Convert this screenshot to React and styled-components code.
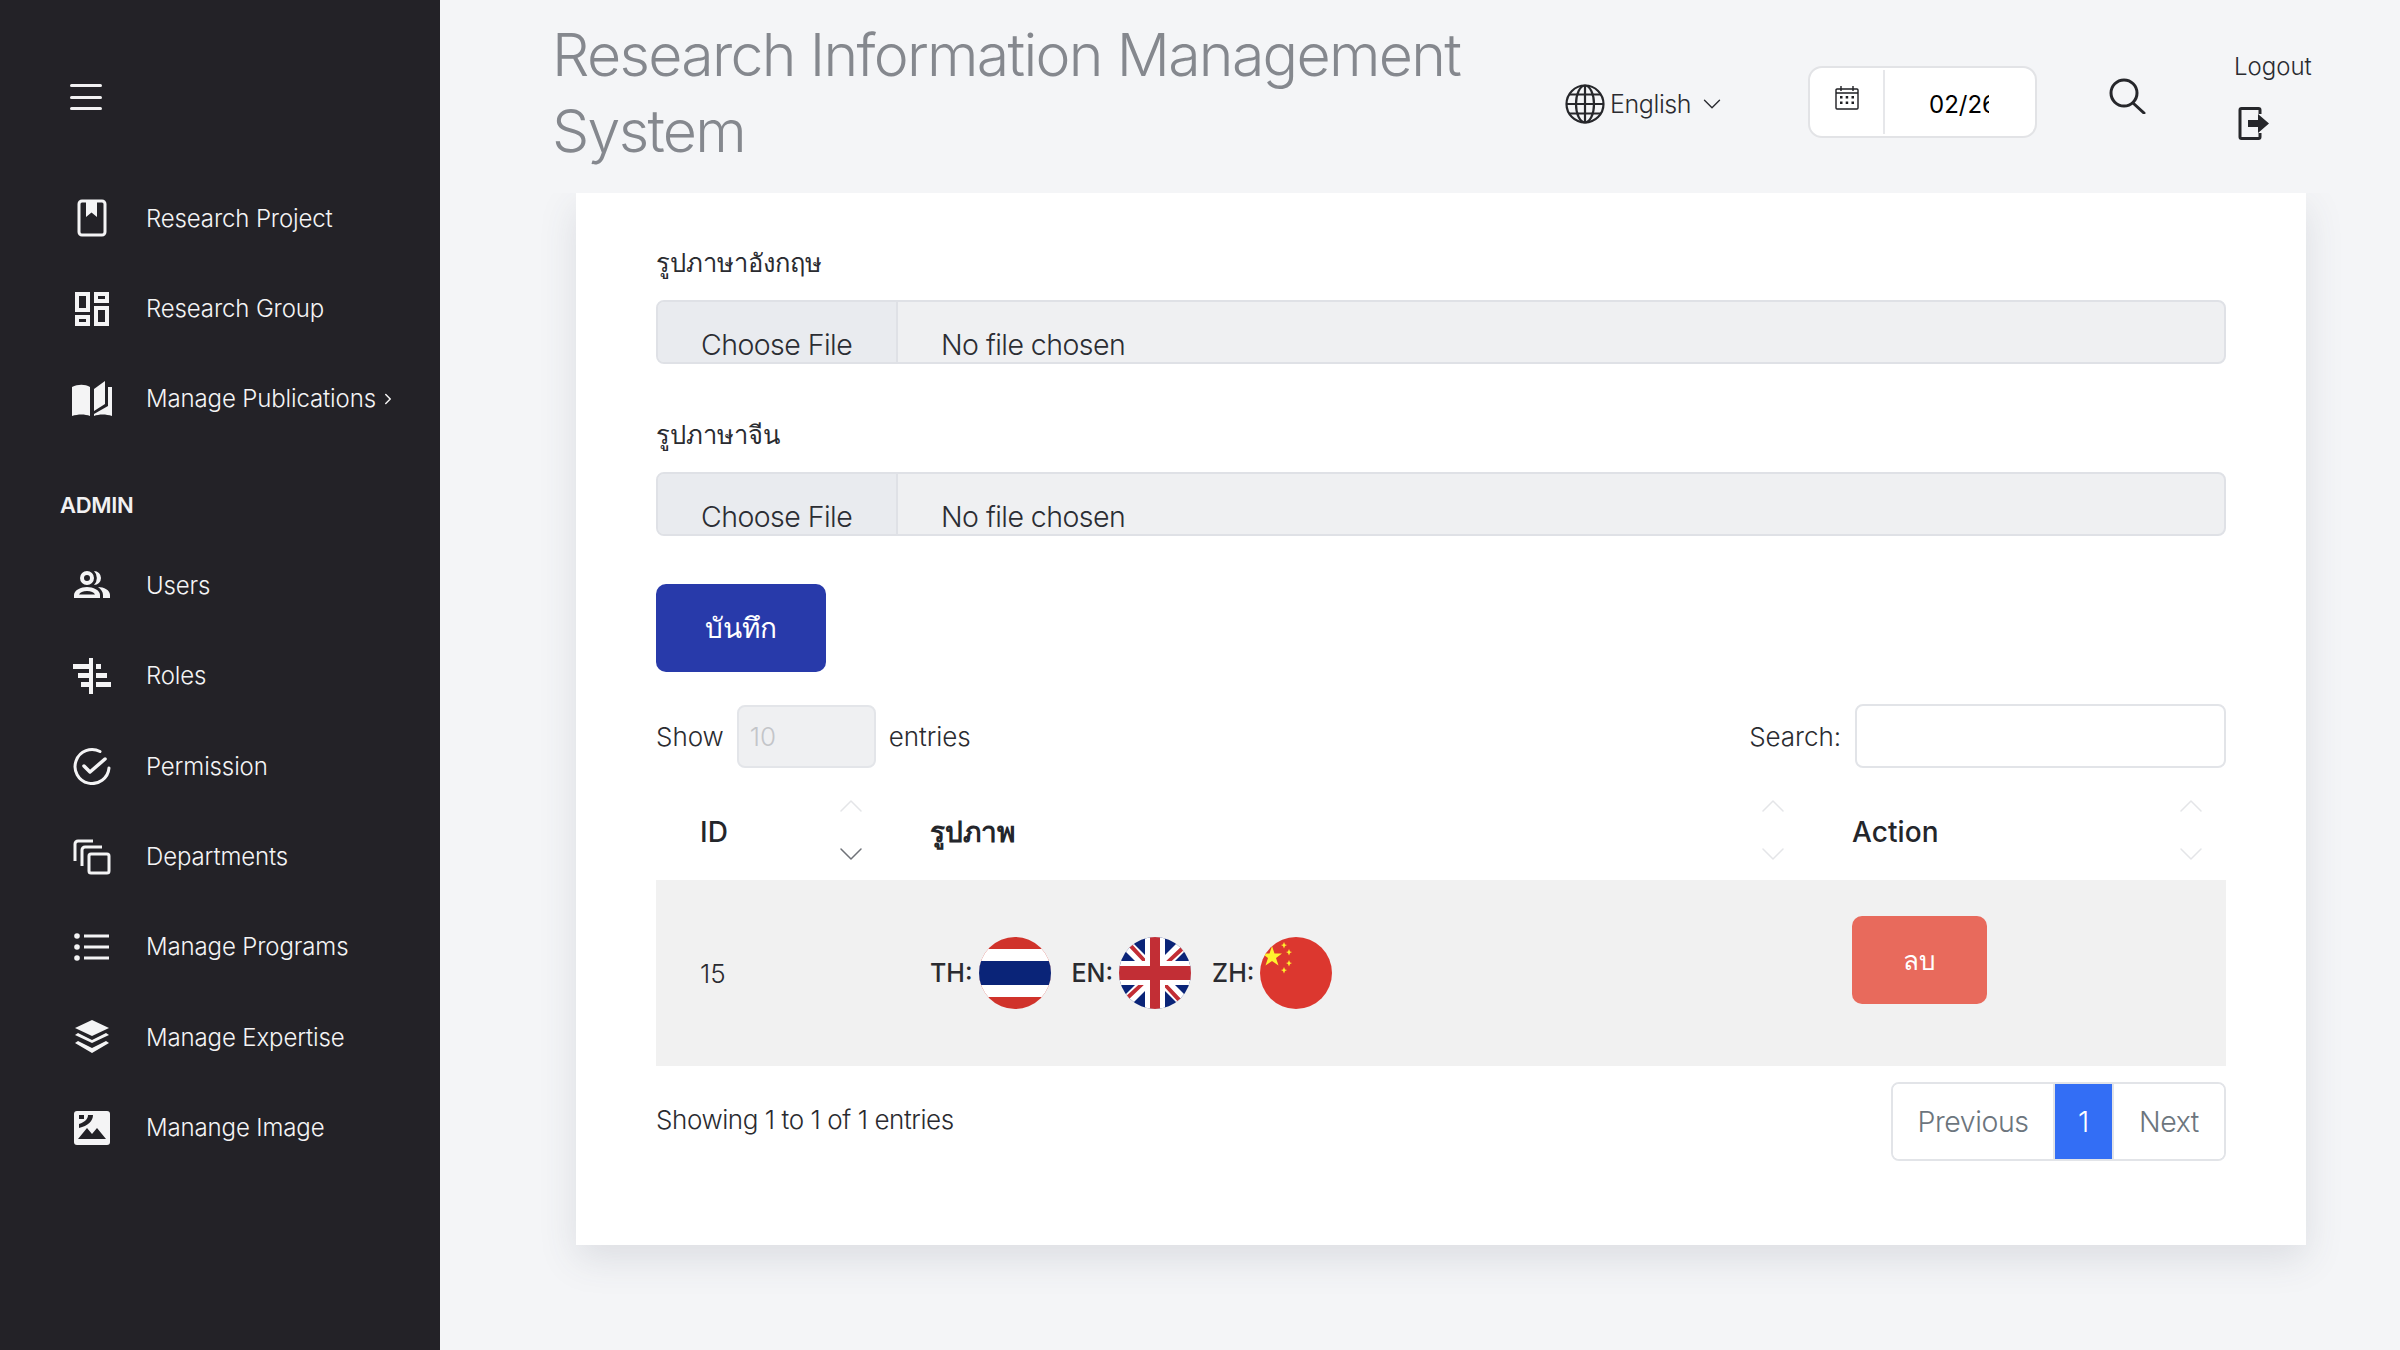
import React from 'react';
import styled, { createGlobalStyle } from 'styled-components';
import { FiChevronDown, FiChevronRight, FiChevronUp } from 'react-icons/fi';

const GlobalStyle = createGlobalStyle`
    html, body {
        margin: 0;
        padding: 0;
        background: #f4f5f7;
        font-family: Inter, "Noto Sans", "DejaVu Sans", sans-serif;
        color: #24262b;
    }
    * { box-sizing: border-box; }
`;

// Page shell
const Page = styled.div`
    display: flex;
    width: 2400px;
    height: 1350px;
    overflow: hidden;
    background: #f4f5f7;
`;

const Sidebar = styled.aside`
    width: 440px;
    flex: none;
    background: #232227;
    color: #f1f1f2;
    padding: 84px 0 0 60px;
`;

const Burger = styled.button`
    display: flex;
    flex-direction: column;
    gap: 8.500px;
    width: 32px;
    margin: 0 0 63px 10px;
    padding: 0;
    background: none;
    border: none;
    span {
        height: 3px;
        border-radius: 2px;
        background: #f1f1f2;
    }
`;

const NavItem = styled.a`
    display: flex;
    align-items: center;
    height: 90.400px;
    font-size: 24px;
    letter-spacing: -0.130px;
    font-weight: 300;
    color: #f4f4f5;
`;

const NavIcon = styled.span`
    display: flex;
    justify-content: center;
    width: 64px;
    margin-right: 22px;
    svg { display: block; }
`;

const NavTitle = styled.div`
    font-size: 22px;
    font-weight: 600;
    letter-spacing: -0.300px;
    margin: 46px 0 20px;
    line-height: 30px;
`;

const Main = styled.main`
    flex: 1;
    min-width: 0;
`;

// Top bar
const Header = styled.header`
    position: relative;
    z-index: 1;
    display: flex;
    align-items: flex-start;
    height: 193px;
    padding-left: 112px;
    background: #f4f5f7;
`;

const AppTitle = styled.h1`
    width: 1013px;
    flex: none;
    margin: 17px 0 0;
    font-size: 59px;
    line-height: 76px;
    font-weight: 300;
    letter-spacing: -1.700px;
    color: #85888e;
`;

const LangPicker = styled.div`
    display: flex;
    align-items: center;
    width: 243px;
    flex: none;
    margin-top: 84px;
    height: 40px;
    font-size: 25px;
    font-weight: 300;
    letter-spacing: -0.400px;
    color: #2a2b30;
    gap: 5px;
    svg:last-child { margin-left: 1px; }
`;

const DateBox = styled.div`
    display: flex;
    width: 229px;
    height: 72px;
    flex: none;
    margin-top: 66px;
    margin-right: 72px;
    background: #fff;
    border: 2px solid #e2e3e6;
    border-radius: 14px;
    align-items: stretch;
`;

const DateIcon = styled.span`
    display: flex;
    align-items: flex-start;
    justify-content: center;
    width: 75px;
    padding-top: 16px;
    border-right: 2px solid #e6e7ea;
    margin: 2px 0;
`;

const DateInput = styled.input`
    width: 60px;
    margin-left: 44px;
    margin-top: 4px;
    padding: 0;
    border: none;
    outline: none;
    background: transparent;
    font: 400 24px Inter, sans-serif;
    color: #000;
`;

const SearchButton = styled.button`
    flex: none;
    width: 37px;
    height: 36px;
    margin-top: 78px;
    margin-right: 88px;
    padding: 0;
    background: none;
    border: none;
`;

const Logout = styled.div`
    display: flex;
    flex-direction: column;
    margin-top: 52px;
    font-size: 24px;
    font-weight: 300;
    line-height: 30px;
    color: #2a2b30;
    svg { margin: 25px 0 0 4px; display: block; }
`;

// Form card
const Card = styled.section`
    width: 1730px;
    margin-left: 136px;
    padding: 50px 80px 84px 80px;
    background: #fff;
    box-shadow: 0 14px 36px rgba(60, 70, 90, 0.13);
`;

const FieldLabel = styled.label`
    display: block;
    height: 40px;
    line-height: 39px;
    margin-bottom: 17px;
    font-size: 25.500px;
    color: #2a2b30;
`;

const FileBox = styled.div`
    display: flex;
    height: 64px;
    margin-bottom: 51px;
    border: 2px solid #dfe1e6;
    border-radius: 8px;
    background: #eff0f2;
    overflow: hidden;
    font-size: 28.500px;
    font-weight: 300;
    letter-spacing: -0.550px;
    line-height: 34px;
    color: #2b2d33;
`;

const FileButton = styled.span`
    width: 240px;
    flex: none;
    padding: 26px 0 0 43px;
    background: #e9ebef;
    border-right: 2px solid #dfe1e6;
`;

const FileName = styled.span`
    padding: 26px 0 0 43px;
`;

const SaveButton = styled.button`
    display: block;
    width: 170px;
    height: 88px;
    margin: -3px 0 32px;
    padding: 0;
    border: none;
    border-radius: 10px;
    background: #283aaa;
    color: #fff;
    font: 400 28px Inter, "Noto Sans", sans-serif;
`;

// Table controls
const Controls = styled.div`
    display: flex;
    align-items: center;
    justify-content: space-between;
    height: 64px;
    font-size: 26px;
    font-weight: 300;
    letter-spacing: -0.050px;
    color: #2a2b30;
`;

const ControlGroup = styled.div`
    display: flex;
    align-items: center;
    gap: ${p => p.$gap}px;
`;

const PageSize = styled.input`
    width: 139px;
    height: 63px;
    padding: 0 11px;
    background: #eff0f2;
    border: 2px solid #e3e5e9;
    border-radius: 8px;
    font: 300 26px Inter, sans-serif;
    color: #c3c5c9;
`;

const SearchInput = styled.input`
    width: 371px;
    height: 64px;
    background: #fff;
    border: 2px solid #e2e4e8;
    border-radius: 8px;
`;

const Table = styled.table`
    width: 100%;
    border-collapse: collapse;
    table-layout: fixed;
`;

const Th = styled.th`
    position: relative;
    width: ${p => p.$width}px;
    height: 112px;
    padding: 16px 44px 0;
    text-align: left;
    font-size: 28px;
    font-weight: ${p => (p.$thai ? 700 : 500)};
    letter-spacing: 0.100px;
    color: #24262b;
`;

const SortUp = styled(FiChevronUp)`
    position: absolute;
    right: ${p => p.$right}px;
    top: 18px;
    color: #e4e5e8;
`;

const SortDown = styled(FiChevronDown)`
    position: absolute;
    right: ${p => p.$right}px;
    top: 66px;
    color: ${p => (p.$active ? '#6f7278' : '#e4e5e8')};
`;

const Td = styled.td`
    height: 186px;
    padding: ${p => (p.$top ? '36px 44px 62px' : '0 44px')};
    vertical-align: ${p => (p.$top ? 'top' : 'middle')};
    background: #f1f1f1;
    font-size: 26px;
    font-weight: 300;
    color: #2a2b30;
`;

const Flags = styled.div`
    display: flex;
    align-items: center;
    font-size: 25px;
    font-weight: 500;
    line-height: 28px;
    svg { display: block; margin: 0 21px 0 6px; }
`;

const DeleteButton = styled.button`
    display: block;
    width: 135px;
    height: 88px;
    padding: 0;
    border: none;
    border-radius: 10px;
    background: #e86a5c;
    color: #fff;
    font: 400 26px Inter, "Noto Sans", sans-serif;
`;

const TableFooter = styled.div`
    display: flex;
    justify-content: space-between;
    align-items: center;
    margin-top: 16px;
    font-size: 26px;
    font-weight: 300;
    letter-spacing: -0.420px;
    color: #2a2b30;
`;

const FooterInfo = styled.span`
    margin-bottom: 5px;
`;

const Pagination = styled.div`
    display: flex;
    height: 79px;
    border: 2px solid #e2e4e8;
    border-radius: 8px;
    overflow: hidden;
    font-size: 28.500px;
    color: #6c757d;
`;

const PageLink = styled.a`
    display: flex;
    align-items: center;
    justify-content: center;
    width: ${p => p.$width}px;
    background: ${p => (p.$active ? '#336ef5' : '#fff')};
    color: ${p => (p.$active ? '#fff' : '#6c757d')};
    border-left: ${p => (p.$active ? '2px solid #e2e4e8' : 'none')};
    border-right: ${p => (p.$active ? '2px solid #e2e4e8' : 'none')};
`;

// Sidebar drawings
const stroke = { fill: 'none', stroke: 'currentColor', strokeWidth: 2 };

const BookIcon = () => (
    <svg width="36" height="38" viewBox="0 0 36 38">
        <rect x="5" y="2" width="26" height="34" rx="3" {...stroke} strokeWidth="3" />
        <path d="M12 3h11v15l-5.500-4.500L12 18z" fill="currentColor" />
    </svg>
);

const GroupIcon = () => (
    <svg width="36" height="36" viewBox="0 0 36 36" {...stroke} strokeWidth="4">
        <rect x="3" y="3" width="11" height="16" />
        <rect x="22" y="3" width="11" height="7" />
        <rect x="3" y="26" width="11" height="7" />
        <rect x="22" y="17" width="11" height="16" />
    </svg>
);

const OpenBookIcon = () => (
    <svg width="42" height="38" viewBox="0 0 42 38">
        <path d="M1 7c6-3 13-3 18 0v29c-5-2-12-2-18 0z" fill="currentColor" />
        <path d="M23 9l11-8v23l-11 7z" fill="currentColor" />
        <path d="M37 7h4v29c-6-2-13-2-18 0v-2l14-8z" fill="currentColor" />
    </svg>
);

const UsersIcon = () => (
    <svg width="38" height="28" viewBox="0 0 38 28">
        <circle cx="14" cy="7" r="5" {...stroke} strokeWidth="4" />
        <path d="M21 0a7 7 0 0 1 0 14 10 10 0 0 0 0-14z" fill="currentColor" />
        <path d="M1 27v-3c0-5 7-8 13-8s13 3 13 8v3zM6 23.500h16c-1-2-4-3.500-8-3.500s-7 1.500-8 3.500z" fill="currentColor" fillRule="evenodd" />
        <path d="M25 16c6 0 12 3 12 8v3h-7v-3c0-3-2-6-5-8z" fill="currentColor" />
    </svg>
);

const RolesIcon = () => (
    <svg width="38" height="36" viewBox="0 0 38 36" fill="currentColor">
        <rect x="16" y="0" width="4" height="36" />
        <rect x="0" y="6" width="16" height="5" />
        <rect x="5" y="15" width="11" height="5" />
        <rect x="8" y="24" width="8" height="5" />
        <rect x="23" y="6" width="5" height="5" />
        <rect x="23" y="15" width="11" height="5" />
        <rect x="23" y="24" width="15" height="5" />
    </svg>
);

const PermissionIcon = () => (
    <svg width="38" height="38" viewBox="0 0 38 38" {...stroke} strokeWidth="3">
        <path d="M27 4.500A17 17 0 1 0 36 21" strokeLinecap="round" />
        <path d="M11 19l6 6 15-13" strokeWidth="3.500" strokeLinecap="round" strokeLinejoin="round" />
    </svg>
);

const DepartmentsIcon = () => (
    <svg width="38" height="36" viewBox="0 0 38 36" {...stroke} strokeWidth="3">
        <path d="M2 22V5a3 3 0 0 1 3-3h15" />
        <path d="M9 27V11a3 3 0 0 1 3-3h17" />
        <rect x="16" y="15" width="20" height="19" rx="2" />
    </svg>
);

const ListIcon = () => (
    <svg width="36" height="28" viewBox="0 0 36 28" fill="currentColor">
        <circle cx="3" cy="3" r="2.800" />
        <circle cx="3" cy="14" r="2.800" />
        <circle cx="3" cy="25" r="2.800" />
        <rect x="10" y="1.500" width="25" height="3" />
        <rect x="10" y="12.500" width="25" height="3" />
        <rect x="10" y="23.500" width="25" height="3" />
    </svg>
);

const LayersIcon = () => (
    <svg width="34" height="34" viewBox="0 0 34 34" fill="currentColor">
        <path d="M17 0l17 8-17 8L0 8z" />
        <path d="M3 13l14 7 14-7 3 2-17 8L0 15z" />
        <path d="M3 21l14 7 14-7 3 2-17 10L0 23z" />
    </svg>
);

const ImageIcon = () => (
    <svg width="36" height="34" viewBox="0 0 36 34">
        <rect x="0" y="0" width="36" height="34" rx="3" fill="currentColor" />
        <path d="M4 28l9-11 5 6 5-6 9 11z" fill="#232227" />
        <path d="M5 4h5v4H5zM14 4h5c0 6-5 11-14 13v-4c6-2 9-5 9-9z" fill="#232227" />
    </svg>
);

const GlobeIcon = () => (
    <svg width="40" height="40" viewBox="0 0 40 40" fill="none" stroke="#26272b" strokeWidth="2.200">
        <circle cx="20" cy="20" r="18.500" />
        <ellipse cx="20" cy="20" rx="9" ry="18.500" />
        <path d="M20 1.500v37M1.500 20h37M4 10.500h32M4 29.500h32" />
    </svg>
);

const CalendarIcon = () => (
    <svg width="24" height="24" viewBox="0 0 24 24" fill="none" stroke="#1e1f23" strokeWidth="1.400">
        <rect x="1" y="3" width="22" height="20" rx="1" />
        <path d="M6 0v5M18 0v5M1 7h22" />
        <g fill="#1e1f23" stroke="none">
            <rect x="5" y="10" width="2.500" height="2.500" />
            <rect x="10.700" y="10" width="2.500" height="2.500" />
            <rect x="16.500" y="10" width="2.500" height="2.500" />
            <rect x="5" y="15.500" width="2.500" height="2.500" />
            <rect x="10.700" y="15.500" width="2.500" height="2.500" />
            <rect x="16.500" y="15.500" width="2.500" height="2.500" />
        </g>
    </svg>
);

const SearchIcon = () => (
    <svg width="37" height="36" viewBox="0 0 37 36" fill="none" stroke="#26272b" strokeWidth="3">
        <circle cx="15" cy="15" r="13" />
        <path d="M24 25l11 10" strokeLinecap="round" />
    </svg>
);

const LogoutIcon = () => (
    <svg width="32" height="33" viewBox="0 0 32 33" fill="none">
        <path d="M22 7V3a1.500 1.500 0 0 0-1.500-1.500h-17A1.500 1.500 0 0 0 2 3v27a1.500 1.500 0 0 0 1.500 1.500h17A1.500 1.500 0 0 0 22 30v-4" stroke="#26272b" strokeWidth="3" />
        <path d="M10 13h10V7l11 9.500L20 26v-6H10z" fill="#26272b" />
    </svg>
);

// Flags
const ThaiFlag = () => (
    <svg width="72" height="72" viewBox="0 0 72 72">
        <defs><clipPath id="th"><circle cx="36" cy="36" r="36" /></clipPath></defs>
        <g clipPath="url(#th)">
            <rect width="72" height="72" fill="#d0332b" />
            <rect y="12" width="72" height="48" fill="#fff" />
            <rect y="24" width="72" height="24" fill="#0a2478" />
        </g>
    </svg>
);

const UkFlag = () => (
    <svg width="72" height="72" viewBox="0 0 72 72">
        <defs><clipPath id="uk"><circle cx="36" cy="36" r="36" /></clipPath></defs>
        <g clipPath="url(#uk)">
            <rect width="72" height="72" fill="#0a2478" />
            <path d="M-4 4L4-4l72 72-8 8zM68-4l8 8L4 76l-8-8z" fill="#fff" />
            <path d="M8 8l3-3 20 22-4 1zM64 8l3 3-22 20-1-4zM8 64l-3-3 22-20 1 4zM64 64l-3 3-20-22 4-1z" fill="#c22e35" />
            <rect x="26" width="20" height="72" fill="#fff" />
            <rect y="24" width="72" height="24" fill="#fff" />
            <rect x="31" width="10" height="72" fill="#c22e35" />
            <rect y="29" width="72" height="14" fill="#c22e35" />
        </g>
    </svg>
);

const ChinaFlag = () => (
    <svg width="72" height="72" viewBox="0 0 72 72">
        <defs><clipPath id="zh"><circle cx="36" cy="36" r="36" /></clipPath></defs>
        <g clipPath="url(#zh)">
            <rect width="72" height="72" fill="#dc372f" />
            <path d="M12 9l2.500 7.500 7.500 0-6 4.500 2.500 7.500-6.500-4.500-6.500 4.500L8 21l-6-4.500 7.500 0z" fill="#fff22e" />
            <path d="M24 5l1 2.500 2 .5-2 1-1 2.500-1-2.500-2-1 2-.5zM29 12l1 2.500 2 .5-2 1-1 2.500-1-2.500-2-1 2-.5zM29 23l1 2.500 2 .5-2 1-1 2.500-1-2.500-2-1 2-.5zM24 30l1 2.500 2 .5-2 1-1 2.500-1-2.500-2-1 2-.5z" fill="#fff22e" />
        </g>
    </svg>
);

const App = () => {
    const mainNav = [
        { label: 'Research Project', icon: <BookIcon /> },
        { label: 'Research Group', icon: <GroupIcon /> },
        { label: 'Manage Publications', icon: <OpenBookIcon />, more: true },
    ];
    const adminNav = [
        { label: 'Users', icon: <UsersIcon /> },
        { label: 'Roles', icon: <RolesIcon /> },
        { label: 'Permission', icon: <PermissionIcon /> },
        { label: 'Departments', icon: <DepartmentsIcon /> },
        { label: 'Manage Programs', icon: <ListIcon /> },
        { label: 'Manage Expertise', icon: <LayersIcon /> },
        { label: 'Manange Image', icon: <ImageIcon /> },
    ];

    const renderItem = item => (
        <NavItem key={item.label}>
            <NavIcon>{item.icon}</NavIcon>
            {item.label}
            {item.more && <FiChevronRight size={18} style={{ marginLeft: 3 }} />}
        </NavItem>
    );

    const sortProps = { size: 40, strokeWidth: 0.9, $right: 15 };

    return (
        <Page>
            <GlobalStyle />
            <Sidebar>
                <Burger aria-label="menu"><span /><span /><span /></Burger>
                {mainNav.map(renderItem)}
                <NavTitle>ADMIN</NavTitle>
                {adminNav.map(renderItem)}
            </Sidebar>
            <Main>
                <Header>
                    <AppTitle>Research Information Management System</AppTitle>
                    <LangPicker>
                        <GlobeIcon />
                        English
                        <FiChevronDown size={30} strokeWidth={1.1} />
                    </LangPicker>
                    <DateBox>
                        <DateIcon><CalendarIcon /></DateIcon>
                        <DateInput readOnly value="02/26/2026" />
                    </DateBox>
                    <SearchButton aria-label="search"><SearchIcon /></SearchButton>
                    <Logout>
                        Logout
                        <LogoutIcon />
                    </Logout>
                </Header>
                <Card>
                    <FieldLabel>รูปภาษาอังกฤษ</FieldLabel>
                    <FileBox>
                        <FileButton>Choose File</FileButton>
                        <FileName>No file chosen</FileName>
                    </FileBox>
                    <FieldLabel>รูปภาษาจีน</FieldLabel>
                    <FileBox>
                        <FileButton>Choose File</FileButton>
                        <FileName>No file chosen</FileName>
                    </FileBox>
                    <SaveButton>บันทึก</SaveButton>
                    <Controls>
                        <ControlGroup $gap={13}>
                            Show
                            <PageSize readOnly disabled value="10" />
                            entries
                        </ControlGroup>
                        <ControlGroup $gap={14}>
                            Search:
                            <SearchInput />
                        </ControlGroup>
                    </Controls>
                    <Table>
                        <thead>
                            <tr>
                                <Th $width={230}>
                                    ID
                                    <SortUp {...sortProps} />
                                    <SortDown {...sortProps} $active />
                                </Th>
                                <Th $width={922} $thai>
                                    รูปภาพ
                                    <SortUp {...sortProps} />
                                    <SortDown {...sortProps} />
                                </Th>
                                <Th>
                                    Action
                                    <SortUp {...sortProps} />
                                    <SortDown {...sortProps} />
                                </Th>
                            </tr>
                        </thead>
                        <tbody>
                            <tr>
                                <Td>15</Td>
                                <Td>
                                    <Flags>
                                        TH: <ThaiFlag />
                                        EN: <UkFlag />
                                        ZH: <ChinaFlag />
                                    </Flags>
                                </Td>
                                <Td $top><DeleteButton>ลบ</DeleteButton></Td>
                            </tr>
                        </tbody>
                    </Table>
                    <TableFooter>
                        <FooterInfo>Showing 1 to 1 of 1 entries</FooterInfo>
                        <Pagination>
                            <PageLink $width={160}>Previous</PageLink>
                            <PageLink $width={61} $active>1</PageLink>
                            <PageLink $width={110}>Next</PageLink>
                        </Pagination>
                    </TableFooter>
                </Card>
            </Main>
        </Page>
    );
};

export default App;
